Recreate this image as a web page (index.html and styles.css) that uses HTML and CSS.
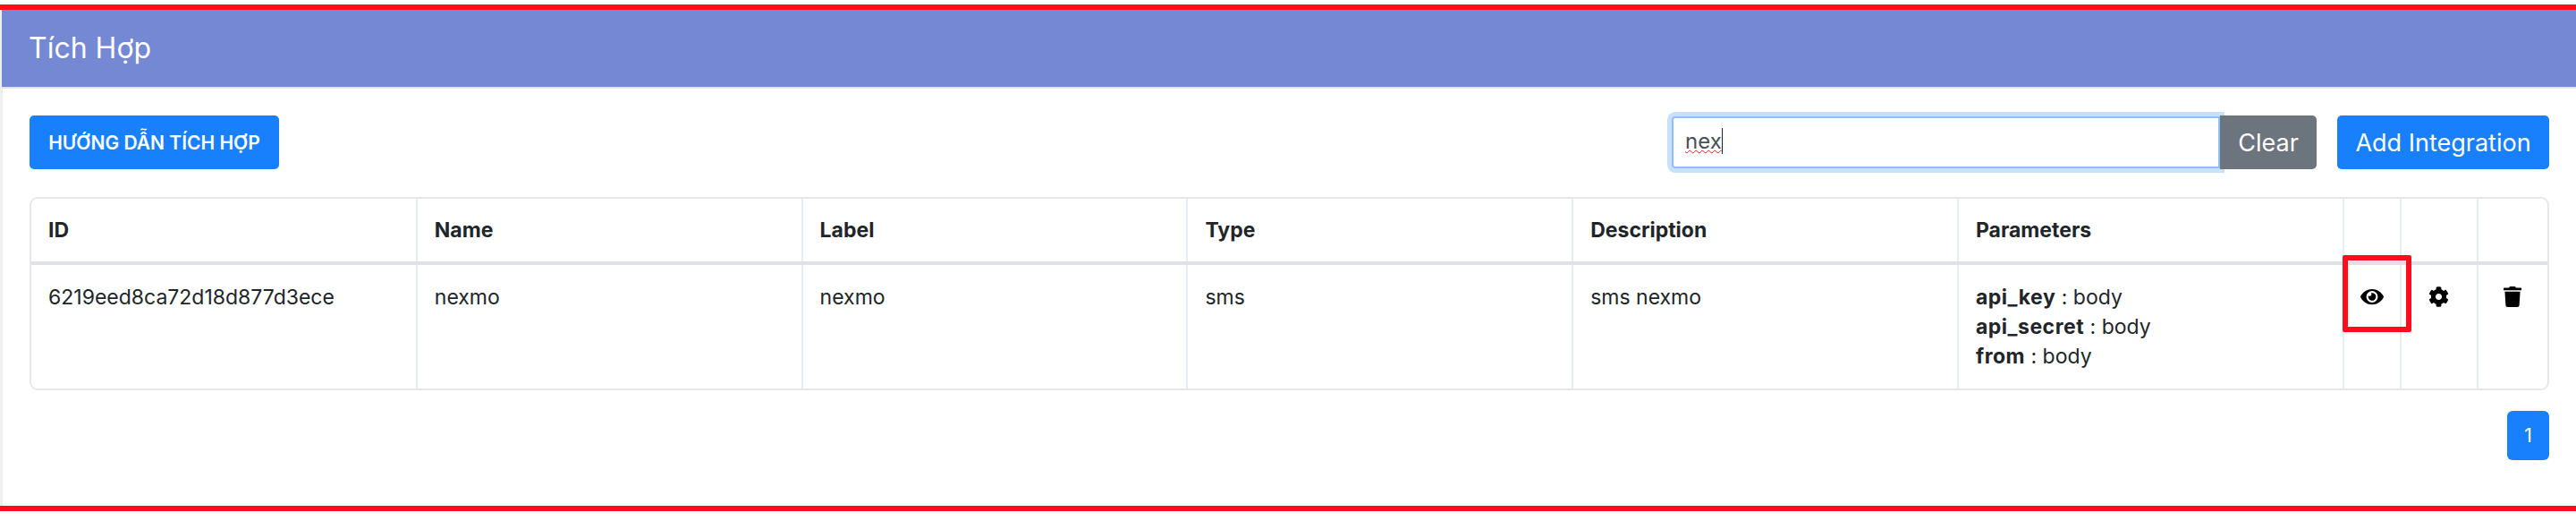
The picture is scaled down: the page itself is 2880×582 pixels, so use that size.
FILE: index.html
```html
<!DOCTYPE html>
<html lang="vi">
<head>
<meta charset="utf-8">
<title>Tích Hợp</title>
<link rel="stylesheet" href="styles.css">
</head>
<body>
<div class="frame">
  <section class="card">
    <header class="card-head">Tích Hợp</header>
    <div class="card-body">
      <div class="toolbar">
        <button class="btn btn-guide">HƯỚNG DẪN TÍCH HỢP</button>
        <div class="tools-right">
          <div class="search"><span class="typed">nex</span></div>
          <button class="btn btn-clear">Clear</button>
          <button class="btn btn-add">Add Integration</button>
        </div>
      </div>
      <div class="table-wrap">
        <table>
          <colgroup>
            <col class="c-main"><col class="c-main"><col class="c-main"><col class="c-main"><col class="c-main"><col class="c-main">
            <col class="c-eye"><col class="c-gear"><col>
          </colgroup>
          <thead>
            <tr><th>ID</th><th>Name</th><th>Label</th><th>Type</th><th>Description</th><th>Parameters</th><th></th><th></th><th></th></tr>
          </thead>
          <tbody>
            <tr>
              <td>6219eed8ca72d18d877d3ece</td>
              <td>nexmo</td>
              <td>nexmo</td>
              <td>sms</td>
              <td>sms nexmo</td>
              <td><b>api_key</b> : body<br><b>api_secret</b> : body<br><b>from</b> : body</td>
              <td class="icon-cell eye-cell">
                <svg class="i-eye" viewBox="0 0 576 512"><path d="M572.52 241.4C518.29 135.59 410.93 64 288 64S57.68 135.64 3.48 241.41a32.35 32.35 0 0 0 0 29.19C57.71 376.41 165.07 448 288 448s230.32-71.64 284.52-177.41a32.35 32.35 0 0 0 0-29.19zM288 400a144 144 0 1 1 144-144 143.93 143.93 0 0 1-144 144zm0-240a95.31 95.31 0 0 0-25.31 3.79 47.85 47.85 0 0 1-66.9 66.9A95.78 95.78 0 1 0 288 160z"/></svg>
                <span class="highlight"></span>
              </td>
              <td class="icon-cell">
                <svg class="i-gear" viewBox="0 0 512 512"><path d="M487.4 315.7l-42.6-24.6c4.3-23.2 4.3-47 0-70.2l42.6-24.6c4.9-2.8 7.1-8.6 5.5-14-11.1-35.6-30-67.8-54.7-94.6-3.8-4.1-10-5.1-14.8-2.3L380.8 110c-17.9-15.4-38.5-27.3-60.8-35.1V25.8c0-5.6-3.9-10.5-9.4-11.7-36.7-8.2-74.3-7.8-109.2 0-5.5 1.2-9.4 6.1-9.4 11.7V75c-22.2 7.9-42.8 19.8-60.8 35.1L88.7 85.5c-4.9-2.8-11-1.9-14.8 2.3-24.7 26.7-43.6 58.9-54.7 94.6-1.7 5.4.6 11.2 5.5 14L67.3 221c-4.3 23.2-4.3 47 0 70.2l-42.6 24.6c-4.9 2.8-7.1 8.6-5.5 14 11.1 35.6 30 67.8 54.7 94.6 3.8 4.1 10 5.1 14.8 2.3l42.6-24.6c17.9 15.4 38.5 27.3 60.8 35.1v49.2c0 5.6 3.9 10.5 9.4 11.7 36.7 8.2 74.3 7.8 109.2 0 5.5-1.2 9.4-6.1 9.4-11.7v-49.2c22.2-7.9 42.8-19.8 60.8-35.1l42.6 24.6c4.9 2.8 11 1.9 14.8-2.3 24.7-26.7 43.6-58.9 54.7-94.6 1.5-5.5-.7-11.3-5.6-14.1zM256 336c-44.1 0-80-35.9-80-80s35.9-80 80-80 80 35.9 80 80-35.9 80-80 80z"/></svg>
              </td>
              <td class="icon-cell">
                <svg class="i-trash" viewBox="0 0 448 512"><path d="M432 32H312l-9.4-18.7A24 24 0 0 0 281.1 0H166.8a23.72 23.72 0 0 0-21.4 13.3L136 32H16A16 16 0 0 0 0 48v32a16 16 0 0 0 16 16h416a16 16 0 0 0 16-16V48a16 16 0 0 0-16-16zM53.2 467a48 48 0 0 0 47.9 45h245.8a48 48 0 0 0 47.9-45L416 128H32z"/></svg>
              </td>
            </tr>
          </tbody>
        </table>
      </div>
      <div class="pager"><button class="btn btn-page">1</button></div>
    </div>
  </section>
</div>
</body>
</html>
```
FILE: styles.css
```css
* { box-sizing: border-box; }
html, body { margin: 0; padding: 0; background: #fff; }
body {
  font-family: "Inter", "Noto Sans", sans-serif;
  color: #212529;
  height: 582px;
  overflow: hidden;
}
.frame {
  margin-top: 5px;
  height: 566px;
  border-top: 6px solid #ff0d1d;
  border-bottom: 6px solid #ff0d1d;
}
.card {
  height: 100%;
  border-left: 3px solid #eee;
  border-top-left-radius: 4px;
}
.card-head {
  height: 88px;
  background: #7488d4;
  border-bottom: 2px solid #dfe3ee;
  color: #fff;
  font-size: 32px;
  line-height: 86px;
  padding-left: 30px;
  margin-left: -1px;
}
.card-body { padding: 30px 30px 0 30px; }
.toolbar {
  display: flex;
  justify-content: space-between;
  align-items: center;
  height: 60px;
}
.tools-right { display: flex; align-items: center; }
.btn {
  border: 0;
  color: #fff;
  font-family: inherit;
  border-radius: 5px;
  padding: 0;
  height: 60px;
}
.btn-guide {
  width: 279px;
  background: #1880fd;
  font-size: 21px;
  font-weight: 600;
}
.search {
  width: 613px;
  height: 58px;
  background: #fff;
  border: 2px solid #8ebffb;
  box-shadow: 0 0 0 5px #c9e0fd;
  border-radius: 4px 0 0 4px;
  padding: 0 13px;
  font-size: 24px;
  line-height: 52px;
  color: #495057;
}
.typed {
  text-decoration: underline wavy #e0202a 1px;
  border-right: 1px solid #222;
}
.btn-clear {
  width: 108px;
  background: #6c757d;
  font-size: 27px;
  border-radius: 0 5px 5px 0;
  margin-right: 23px;
  position: relative;
}
.btn-add {
  width: 237px;
  background: #1880fd;
  font-size: 27px;
}
.table-wrap {
  margin-top: 31px;
  height: 216px;
  border: 2px solid #e7e8ea;
  border-radius: 9px;
  overflow: visible;
}
table {
  width: 100%;
  height: 100%;
  table-layout: fixed;
  border-collapse: collapse;
  font-size: 23px;
}
.c-main { width: 430.8px; }
.c-eye { width: 64px; }
.c-gear { width: 86px; }
th, td {
  border-left: 2px solid #e9ecef;
  text-align: left;
  padding: 0 19px;
}
th:first-child, td:first-child { border-left: 0; }
th {
  height: 72px;
  font-weight: 700;
  border-bottom: 4px solid #dee2e6;
}
td {
  vertical-align: top;
  padding-top: 20px;
  line-height: 33px;
  font-weight: 400;
}
td b { font-weight: 700; letter-spacing: 0.5px; }
.icon-cell { padding: 19px 0 0; text-align: center; }
.eye-cell { position: relative; }
.icon-cell svg { display: inline-block; vertical-align: top; fill: #000; margin-top: 5px; }
.i-eye { width: 26px; height: 23px; }
.i-gear { width: 23px; height: 23px; }
.i-trash { width: 20px; height: 23px; }
.highlight {
  position: absolute;
  left: -2px;
  top: -11px;
  width: 77px;
  height: 86px;
  border: 6px solid #ff0d1d;
  border-radius: 2px;
}
.pager {
  display: flex;
  justify-content: flex-end;
  margin-top: 23px;
}
.btn-page {
  width: 47px;
  height: 55px;
  background: #1880fd;
  font-size: 21px;
  border-radius: 6px;
}
```
